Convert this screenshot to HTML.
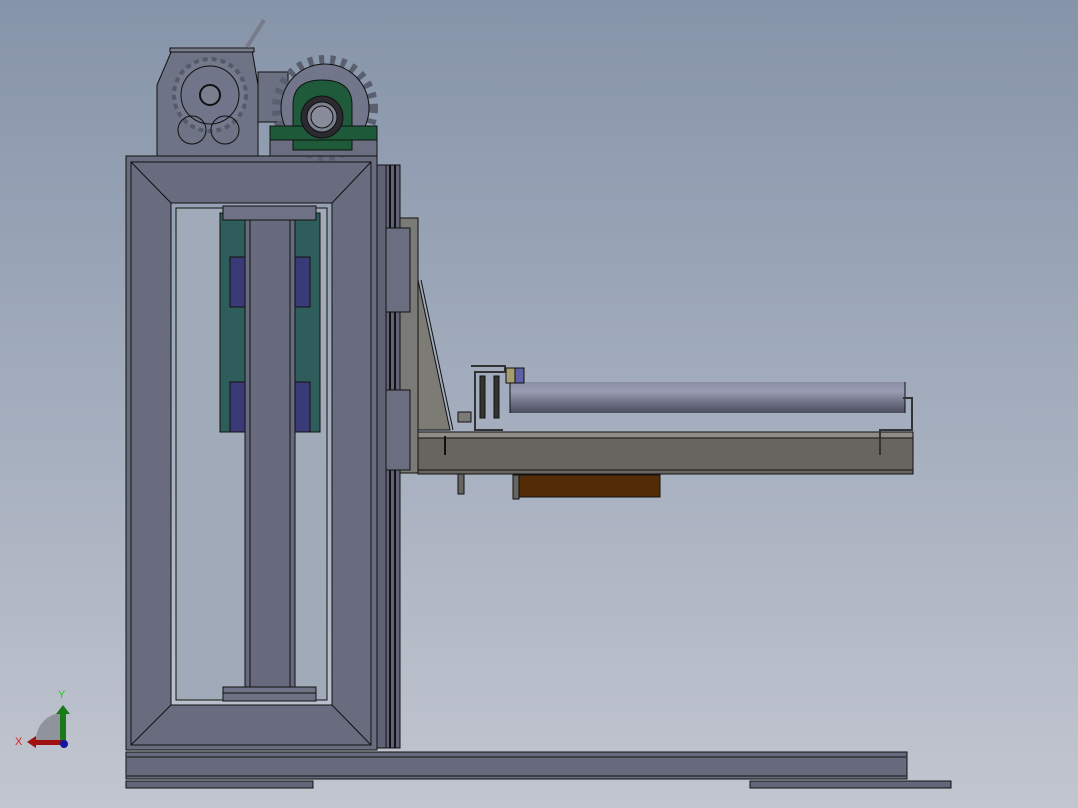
<!DOCTYPE html>
<html><head><meta charset="utf-8"><style>
html,body{margin:0;padding:0;width:1078px;height:808px;overflow:hidden}
svg{display:block}
</style></head><body>
<svg width="1078" height="808" viewBox="0 0 1078 808" xmlns="http://www.w3.org/2000/svg">
<defs>
<linearGradient id="bg" x1="0" y1="0" x2="0" y2="1">
<stop offset="0" stop-color="#8694a9"/><stop offset="0.5" stop-color="#a3adbd"/><stop offset="1" stop-color="#c2c6d0"/>
</linearGradient>
<linearGradient id="roll" x1="0" y1="0" x2="0" y2="1">
<stop offset="0" stop-color="#8a8ea4"/><stop offset="0.3" stop-color="#9a9db2"/><stop offset="0.7" stop-color="#6a6d80"/><stop offset="1" stop-color="#4c4f60"/>
</linearGradient>
</defs>
<rect width="1078" height="808" fill="url(#bg)"/>
<g stroke="#111" stroke-width="1">
<rect x="126" y="781" width="187" height="7" fill="#62667a"/>
<rect x="750" y="781" width="201" height="7" fill="#62667a"/>
<rect x="126" y="752" width="781" height="27" fill="#676b7d"/>
<line x1="127" y1="757" x2="906" y2="757"/>
<line x1="127" y1="776" x2="906" y2="776"/>
<rect x="377" y="165" width="23" height="583" fill="#5f6375"/>
<line x1="386" y1="165" x2="386" y2="748"/><line x1="390" y1="165" x2="390" y2="748" stroke-width="2"/><line x1="395" y1="165" x2="395" y2="748" stroke-width="2"/>
<path d="M126 156H377V750H126Z M171 203V705H332V203Z" fill="#686c7e" fill-rule="evenodd"/>
<rect x="131" y="162" width="240" height="583" fill="none"/>
<line x1="131" y1="162" x2="171" y2="203"/><line x1="371" y1="162" x2="332" y2="203"/>
<line x1="131" y1="745" x2="171" y2="705"/><line x1="371" y1="745" x2="332" y2="705"/>
<rect x="176" y="208" width="151" height="492" fill="#a1aab9"/>
<rect x="220" y="213" width="100" height="219" fill="#2e5d5c"/>
<rect x="230" y="257" width="15" height="50" fill="#3a3a78"/><rect x="295" y="257" width="15" height="50" fill="#3a3a78"/>
<rect x="230" y="382" width="15" height="50" fill="#3a3a78"/><rect x="295" y="382" width="15" height="50" fill="#3a3a78"/>
<rect x="245" y="220" width="50" height="468" fill="#666a7c"/>
<line x1="250" y1="220" x2="250" y2="688"/><line x1="290" y1="220" x2="290" y2="688"/>
<rect x="223" y="206" width="93" height="14" fill="#6e7284"/>
<rect x="223" y="687" width="93" height="14" fill="#6e7284"/>
<line x1="223" y1="693" x2="316" y2="693"/>
<rect x="258" y="72" width="30" height="50" fill="#6b7082"/>
<path d="M172 50H252L258 85V156H157V85Z" fill="#6e7385"/>
<rect x="170" y="48" width="84" height="4" fill="#7a7f90"/>
<circle cx="210" cy="95" r="36" fill="#74798b" stroke-dasharray="5 4" stroke-width="4" stroke="#555a6a"/>
<circle cx="210" cy="95" r="29" fill="#70758a"/>
<circle cx="210" cy="95" r="10" fill="#7a7f90" stroke-width="2"/>
<circle cx="192" cy="130" r="14" fill="none"/><circle cx="225" cy="130" r="14" fill="none"/>
<line x1="247" y1="47" x2="264" y2="20" stroke="#777b8c" stroke-width="4"/>
<circle cx="325" cy="108" r="48" fill="none" stroke="#5a5f70" stroke-dasharray="5 6" stroke-width="10"/>
<circle cx="325" cy="108" r="44" fill="#71768a"/>
<rect x="270" y="138" width="107" height="18" fill="#6a6e80"/>
<path d="M293 150V105Q293 80 322 80Q352 80 352 105V150Z" fill="#1f5a3a"/>
<rect x="270" y="126" width="107" height="14" fill="#1e5a3a"/>
<circle cx="322" cy="117" r="21" fill="#2a2a30"/>
<circle cx="322" cy="117" r="15" fill="#7d8090"/>
<circle cx="322" cy="117" r="11" fill="#888b99"/>
<rect x="400" y="218" width="18" height="255" fill="#7a7a76"/>
<rect x="386" y="228" width="24" height="84" fill="#6a6e80"/>
<rect x="386" y="390" width="24" height="80" fill="#6a6e80"/>
<path d="M418 280L450 430H418Z" fill="#7c7b74"/>
<line x1="421" y1="280" x2="453" y2="430"/>
<rect x="418" y="432" width="495" height="42" fill="#66655f"/>
<rect x="418" y="432" width="495" height="6" fill="#8e8c84"/>
<line x1="418" y1="470" x2="913" y2="470"/>
<rect x="458" y="474" width="6" height="20" fill="#66655f"/>
<rect x="518" y="475" width="142" height="22" fill="#532b07"/>
<rect x="513" y="475" width="6" height="24" fill="#66655f"/>
<rect x="510" y="382" width="395" height="31" fill="url(#roll)" stroke="none"/>
<line x1="510" y1="382" x2="510" y2="413"/><line x1="905" y1="382" x2="905" y2="413"/>
<path d="M471 366H505V372H475V430H503" fill="none" stroke="#333" stroke-width="2"/>
<rect x="480" y="376" width="5" height="42" fill="#333"/><rect x="494" y="376" width="5" height="42" fill="#333"/>
<rect x="506" y="368" width="10" height="15" fill="#a69c70"/><rect x="515" y="368" width="9" height="15" fill="#5f5fa6"/>
<path d="M903 398H912V430H880V455" fill="none" stroke="#333" stroke-width="2"/>
<path d="M445 436V455" fill="none" stroke-width="2"/>
<rect x="458" y="412" width="13" height="10" fill="#7a7a76"/>
</g>
<path d="M36 740A27 27 0 0 1 63 713V740Z" fill="#8f939c"/>
<rect x="60" y="712" width="6" height="30" fill="#1a7a1a"/>
<path d="M56 714L63 705L70 714Z" fill="#1a7a1a"/>
<rect x="36" y="740" width="27" height="5" fill="#a01010"/>
<path d="M36 736L27 742L36 748Z" fill="#a01010"/>
<circle cx="64" cy="744" r="4" fill="#1515a0"/>
<text x="58" y="698" font-family="Liberation Sans, sans-serif" font-size="11" fill="#20d020">Y</text>
<text x="15" y="745" font-family="Liberation Sans, sans-serif" font-size="11" fill="#e02020">X</text>
</svg>
</body></html>
